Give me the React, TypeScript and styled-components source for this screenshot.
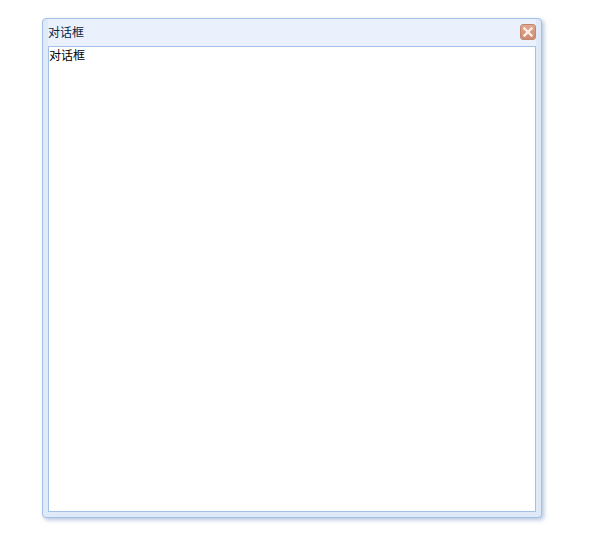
import styled, { createGlobalStyle } from "styled-components";

const GlobalStyle = createGlobalStyle`
  html, body {
    margin: 0;
    padding: 0;
    background: #fff;
  }
`;

export default function App() {
  return (
    <>
      <GlobalStyle />
      <Page>
        <Dialog>
          <TitleBar>
            <Title>对话框</Title>
            <CloseButton type="button" aria-label="关闭">
              <svg width="10" height="10" viewBox="0 0 10 10">
                <path d="M1.5 1.5 L8.5 8.5 M8.5 1.5 L1.5 8.5" stroke="#fbeee8" strokeWidth="2.4" strokeLinecap="square" />
              </svg>
            </CloseButton>
          </TitleBar>
          <Content>对话框</Content>
        </Dialog>
      </Page>
    </>
  );
}

const Page = styled.div`
  width: 594px;
  height: 550px;
  padding: 18px 0 0 42px;
  box-sizing: border-box;
  overflow: hidden;
`;

const Dialog = styled.div`
  width: 500px;
  height: 500px;
  box-sizing: border-box;
  display: flex;
  flex-direction: column;
  padding: 0 5px 5px;
  background: #dfe9f8;
  border: 1px solid #a3c0e8;
  border-radius: 4px;
  box-shadow: 2px 2px 4px rgba(120, 150, 190, 0.55);
`;

const TitleBar = styled.div`
  height: 27px;
  flex: none;
  display: flex;
  align-items: center;
  justify-content: space-between;
  padding-bottom: 2px;
  box-sizing: border-box;
  background: #eaf1fc;
`;

const Title = styled.span`
  font: 12px/14px "Noto Sans CJK SC", "Liberation Sans", sans-serif;
  color: #0b1f45;
`;

const CloseButton = styled.button`
  width: 16px;
  height: 16px;
  padding: 0;
  display: flex;
  align-items: center;
  justify-content: center;
  background: linear-gradient(#e2a78f, #cf8a72);
  border: 1px solid #c08870;
  border-radius: 3px;
`;

const Content = styled.div`
  flex: 1;
  background: #fff;
  border: 1px solid #a3c0e8;
  font: 12px/16px "Noto Sans CJK SC", "Liberation Sans", sans-serif;
  color: #000;
`;
